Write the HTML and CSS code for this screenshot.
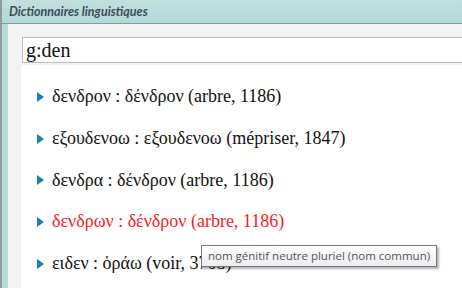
FILE: index.html
```html
<!DOCTYPE html>
<html lang="fr">
<head>
<meta charset="utf-8">
<link rel="stylesheet" href="styles.css">
</head>
<body>
<div class="frame">
  <div class="titlebar">Dictionnaires linguistiques</div>
  <div class="content">
    <div class="search">g:den</div>
    <ul class="list">
      <li class="item"><span class="tri"></span><span>δενδρον : δένδρον (arbre, 1186)</span></li>
      <li class="item"><span class="tri"></span><span>εξουδενοω : εξουδενοω (mépriser, 1847)</span></li>
      <li class="item"><span class="tri"></span><span>δενδρα : δένδρον (arbre, 1186)</span></li>
      <li class="item active"><span class="tri"></span><span>δενδρων : δένδρον (arbre, 1186)</span></li>
      <li class="item"><span class="tri"></span><span>ειδεν : ὁράω (voir, 3708)</span></li>
    </ul>
    <div class="tooltip">nom génitif neutre pluriel (nom commun)</div>
  </div>
</div>
</body>
</html>
```

FILE: styles.css
```css
html, body {
  margin: 0;
  padding: 0;
  width: 462px;
  height: 288px;
  overflow: hidden;
}
.frame {
  display: flex;
  flex-direction: column;
  height: 288px;
  border-left: 2px solid #8f9c9c;
  background: #b8d9d9;
  box-sizing: border-box;
}
.titlebar {
  height: 24px;
  box-sizing: border-box;
  padding: 4px 0 0 7px;
  font-family: "Lato", "Open Sans", sans-serif;
  font-style: italic;
  font-weight: bold;
  font-size: 12.5px;
  color: #3c4c5a;
  background: linear-gradient(#c2dfdf, #b4d8d8);
  border-bottom: 1px solid #7f9e9e;
}
.content {
  position: relative;
  flex: 1;
  margin-left: 6px;
  background: #f3f3f3;
  padding: 13px 0 0 14px;
  overflow: hidden;
}
.search {
  height: 26px;
  box-sizing: border-box;
  background: #fff;
  border: 1px solid #bcbcbc;
  border-right: none;
  padding: 1px 0 0 3px;
  font-family: "Liberation Serif", serif;
  font-size: 20px;
  line-height: 23px;
  color: #111;
}
.list {
  list-style: none;
  margin: 2px 0 0 -1px;
  padding: 11px 0 0 0;
  background: #fff;
  height: 240px;
  box-sizing: border-box;
}
.item {
  display: flex;
  align-items: center;
  height: 41.7px;
  padding-left: 16px;
  font-family: "Liberation Serif", serif;
  font-size: 18px;
  color: #111;
}
.item.active { color: #f51d1d; }
.tri {
  width: 0;
  height: 0;
  border-top: 5px solid transparent;
  border-bottom: 5px solid transparent;
  border-left: 7px solid #1f7dbb;
  margin-right: 8px;
}
.tooltip {
  position: absolute;
  left: 193px;
  top: 221px;
  padding: 2px 6px 3px 6px;
  font-family: "Open Sans", sans-serif;
  font-size: 11.5px;
  color: #555;
  background: linear-gradient(#ffffff, #ececf2);
  border: 1px solid #777;
  box-shadow: 2px 2px 2px rgba(0,0,0,0.3);
  white-space: nowrap;
}
```
